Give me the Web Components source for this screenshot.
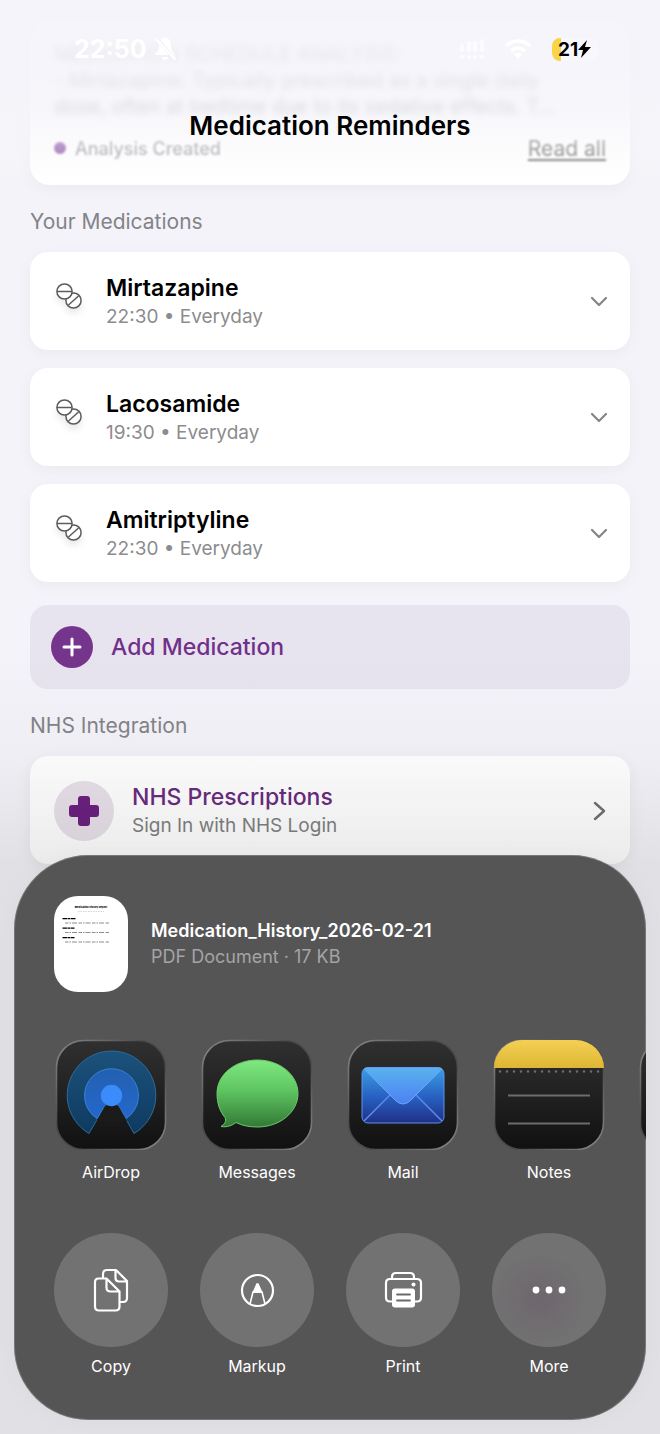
<!DOCTYPE html>
<html lang="en">
<head>
<meta charset="utf-8">
<meta name="viewport" content="width=device-width, initial-scale=1">
<title>Medication Reminders</title>
<style>
  body { margin: 0; background: #f4f3f9; font-family: Inter, "Liberation Sans", sans-serif; color: #000; }
</style>
</head>
<body>
<app-screen>
  <status-bar slot="top"></status-bar>
  <h1 slot="top">Medication Reminders</h1>

  <analysis-card>
    MEDICATION SCHEDULE ANALYSIS:<br>- Mirtazapine: Typically prescribed as a single daily<br>dose, often at bedtime due to its sedative effects. T…
    <span slot="status">Analysis Created</span>
    <a slot="link" href="#analysis">Read all</a>
  </analysis-card>

  <section-title>Your Medications</section-title>
  <card-stack>
    <med-card>Mirtazapine<span slot="when">22:30 • Everyday</span></med-card>
    <med-card>Lacosamide<span slot="when">19:30 • Everyday</span></med-card>
    <med-card>Amitriptyline<span slot="when">22:30 • Everyday</span></med-card>
  </card-stack>
  <add-button>Add Medication</add-button>

  <section-title>NHS Integration</section-title>
  <link-card>NHS Prescriptions<span slot="detail">Sign In with NHS Login</span></link-card>

  <share-sheet slot="sheet">
    <file-preview slot="file">Medication_History_2026-02-21<span slot="meta">PDF Document · 17 KB</span></file-preview>
    <share-target slot="apps" icon="airdrop">AirDrop</share-target>
    <share-target slot="apps" icon="messages">Messages</share-target>
    <share-target slot="apps" icon="mail">Mail</share-target>
    <share-target slot="apps" icon="notes">Notes</share-target>
    <share-target slot="apps" icon="blank"></share-target>
    <share-target slot="actions" round icon="copy">Copy</share-target>
    <share-target slot="actions" round icon="markup">Markup</share-target>
    <share-target slot="actions" round icon="print">Print</share-target>
    <share-target slot="actions" round icon="more">More</share-target>
  </share-sheet>
</app-screen>

<script>
const define = (name, render) => customElements.define(name, class extends HTMLElement {
  constructor() {
    super();
    const t = document.createElement('template');
    t.innerHTML = typeof render === 'function' ? render(this) : render;
    this.attachShadow({ mode: 'open' }).append(t.content.cloneNode(true));
  }
});

define('app-screen', `
<style>
  :host { display: block; position: relative; min-height: 100vh; box-sizing: border-box; overflow: hidden; }
  header { position: absolute; inset: 0 0 auto; box-sizing: border-box; padding: 34px 0 44px; z-index: 1;
    background: linear-gradient(rgba(245,244,250,.95) 0, rgba(245,244,250,.9) 70px, rgba(246,245,250,.84) 110px, rgba(248,248,251,.45) 150px, rgba(255,255,255,0)); }
  ::slotted(h1) { margin: 0; padding-top: 47px; font-size: 26px; line-height: 30px; font-weight: 600; text-align: center; }
  main { padding: 20px 30px 0; }
  .shade { position: absolute; inset: 0; pointer-events: none;
    background: linear-gradient(transparent 640px, rgba(20,25,15,.025) 757px, rgba(20,25,15,.085) 865px, rgba(20,25,15,.085)); }
  aside { position: absolute; inset: auto 14px 14px; }
</style>
<header><slot name="top"></slot></header>
<main><slot></slot></main>
<div class="shade"></div>
<aside><slot name="sheet"></slot></aside>`);

define('status-bar', `
<style>
  :host { display: flex; align-items: center; height: 30px; padding: 0 62px 0 74px; color: #fff; }
  .time { font-size: 25px; line-height: 30px; font-weight: 700; margin-right: 6px; }
  .right { margin-left: auto; display: flex; align-items: center; gap: 20px; }
  svg { display: block; }
  .battery { display: flex; align-items: center; width: 46px; height: 23px; border-radius: 8px; box-sizing: border-box; padding-left: 6px; color: #000;
    font-size: 19px; font-weight: 700; background: linear-gradient(90deg, #f8d548 9px, #f8f8fc 9px); }
</style>
<span class="time">22:50</span>
<svg width="24" height="26" viewBox="0 0 24 26" aria-hidden="true"><path fill="#fff" d="M12 2c-4 0-6 3-6 7 0 5-1 6-4 9v1h20v-1c-3-3-4-4-4-9 0-4-2-7-6-7zM9 21a3 3 0 0 0 6 0z"/><path stroke="#f4f3f9" stroke-width="4" d="M4 3l18 20"/><path stroke="#fff" stroke-width="2" stroke-linecap="round" d="M3 3l19 20"/></svg>
<div class="right">
  <svg width="24" height="22" viewBox="0 0 24 22" fill="#fcfcff" aria-hidden="true"><rect x="0" y="6" width="4" height="8" rx="2"/><rect x="7" y="3" width="4" height="11" rx="2"/><rect x="13" y="3" width="4" height="11" rx="2"/><rect x="20" y="1" width="4" height="13" rx="2"/><circle cx="2" cy="19" r="2"/><circle cx="9" cy="19" r="2"/><circle cx="15" cy="19" r="2"/><circle cx="22" cy="19" r="2"/></svg>
  <svg width="28" height="20" viewBox="0 0 28 20" fill="none" stroke="#fff" stroke-width="3.6" aria-hidden="true"><path d="M2 7a17 17 0 0 1 24 0M7 12a10 10 0 0 1 14 0"/><path fill="#fff" stroke="none" d="M10 15q4-3 8 0l-4 5z"/></svg>
  <div class="battery">21<svg width="13" height="18" viewBox="0 0 13 18" aria-hidden="true"><path d="M9 0L0 10h5l-2 8 10-11H7z"/></svg></div>
</div>`);

define('analysis-card', `
<style>
  :host { display: block; background: #fff; border-radius: 20px; padding: 21px 24px 23px; box-shadow: 0 4px 16px rgba(0,0,0,.04); }
  p { margin: 0; font-size: 20px; line-height: 26px; color: #444; filter: blur(3px); white-space: nowrap; }
  footer { display: flex; align-items: center; gap: 9px; height: 28px; margin-top: 15px; font-size: 18px; font-weight: 500; color: #8e8e93; filter: blur(1px); }
  i { width: 12px; height: 12px; border-radius: 50%; background: #7d3a96; }
  ::slotted(a) { margin-left: auto; color: #555; font-size: 21px; font-weight: 400; text-underline-offset: 3px; }
</style>
<p><slot></slot></p>
<footer><i></i><slot name="status"></slot><slot name="link"></slot></footer>`);

define('section-title', `
<style>
  :host { display: block; margin: 23px 0 16px; }
  h2 { margin: 0; font-size: 21px; line-height: 28px; font-weight: 400; color: #838388; }
</style>
<h2><slot></slot></h2>`);

define('card-stack', `
<style>:host { display: flex; flex-direction: column; gap: 18px; }</style><slot></slot>`);

define('med-card', `
<style>
  :host { display: flex; align-items: center; gap: 22px; padding: 21px 22px 19px 24px; background: #fff; border-radius: 18px; box-shadow: 0 4px 16px rgba(0,0,0,.04); }
  .pills { align-self: flex-start; margin-top: 8px; filter: drop-shadow(0 5px 3px rgba(0,0,0,.08)); }
  .text { flex: 1; }
  h3 { margin: 0; font-size: 23px; line-height: 30px; font-weight: 600; }
  p { margin: 0; font-size: 19px; line-height: 28px; color: #8c8c8e; }
  button { display: flex; padding: 0; border: 0; background: none; }
</style>
<svg class="pills" width="30" height="30" viewBox="0 0 30 30" fill="#fff" stroke="#5c5c5c" stroke-width="1.5" aria-hidden="true"><circle cx="19.5" cy="19.5" r="7.6"/><path d="M14.500 24l10-9"/><circle cx="10.500" cy="10.500" r="7.600"/><path d="M3 10.500h15"/></svg>
<div class="text"><h3><slot></slot></h3><p><slot name="when"></slot></p></div>
<button aria-label="Expand"><svg width="18" height="18" viewBox="0 0 18 18" fill="none" stroke="#858588" stroke-width="2.2" stroke-linecap="round" stroke-linejoin="round"><path d="M2 5l7 7 7-7"/></svg></button>`);

define('add-button', `
<style>
  :host { display: block; margin-top: 23px; }
  button { display: flex; align-items: center; gap: 18px; width: 100%; height: 84px; padding: 0 21px; border: 0; border-radius: 18px; background: #e8e4ef; color: #71308a; font: 500 23px/30px Inter, sans-serif; }
</style>
<button><svg width="42" height="42" viewBox="0 0 42 42" aria-hidden="true"><circle cx="21" cy="21" r="21" fill="#76358c"/><path d="M21 13v16M13 21h16" stroke="#fff" stroke-width="3" stroke-linecap="round"/></svg><span><slot></slot></span></button>`);

define('link-card', `
<style>
  :host { display: block; }
  a { display: flex; align-items: center; gap: 18px; padding: 25px 24px 23px; background: #fff; border-radius: 18px; box-shadow: 0 4px 16px rgba(0,0,0,.06); text-decoration: none; color: #6a2a80; }
  .text { flex: 1; font-size: 23px; line-height: 30px; font-weight: 500; }
  .detail { display: block; font-size: 19px; line-height: 28px; font-weight: 400; color: #7f7f82; }
</style>
<a href="#nhs">
<svg width="60" height="60" viewBox="0 0 60 60" aria-hidden="true"><circle cx="30" cy="30" r="30" fill="#e8e0ea"/><path fill="#6b2080" d="M27 15h6q3 0 3 3v6h6q3 0 3 3v6q0 3-3 3h-6v6q0 3-3 3h-6q-3 0-3-3v-6h-6q-3 0-3-3v-6q0-3 3-3h6v-6q0-3 3-3z"/></svg>
<span class="text"><slot></slot><span class="detail"><slot name="detail"></slot></span></span>
<svg width="14" height="22" viewBox="0 0 14 22" fill="none" stroke="#6f6f71" stroke-width="2.4" stroke-linecap="round" stroke-linejoin="round" aria-hidden="true"><path d="M3 3l9 8-9 8"/></svg></a>`);

define('share-sheet', `
<style>
  :host { display: block; box-sizing: border-box; padding: 41px 0 42px; border-radius: 74px; background: #555556; color: #fff; overflow: hidden; box-shadow: inset 0 0 0 1px rgba(255,255,255,.2), 0 0 24px rgba(0,0,0,.03); }
  .file { padding: 0 40px; }
  .row { display: flex; gap: 32px; padding: 0 40px; overflow: hidden; }
  .apps { margin: 47px 0 49px; }
</style>
<div class="file"><slot name="file"></slot></div>
<div class="row apps"><slot name="apps"></slot></div>
<div class="row"><slot name="actions"></slot></div>`);

define('file-preview', `
<style>
  :host { display: flex; align-items: center; gap: 23px; }
  svg { border-radius: 24px; background: #fff; }
  .name { font-size: 18px; line-height: 26px; font-weight: 600; }
  .meta { font-size: 18px; line-height: 26px; color: #a4a4a6; }
</style>
<svg width="74" height="96" viewBox="0 0 148 192" aria-hidden="true">
<text x="74" y="23" text-anchor="middle" font-size="5" font-weight="800">Medication History Report</text>
<g stroke="#000"><path stroke="#aaa" stroke-width="1" stroke-dasharray="3 2" d="M48 31h52"/>
<path stroke-width="2.500" stroke-dasharray="9 1 5 1" d="M17 45h27M17 64h24M17 83h24"/>
<path stroke="#666" stroke-width="1.500" stroke-dasharray="7 2 3 2 10 3" d="M22 54h88M22 73h88M22 92h88"/></g></svg>
<div><div class="name"><slot></slot></div><div class="meta"><slot name="meta"></slot></div></div>`);

const dark = '<rect x="2.5" y="1.5" width="109" height="109" rx="27" fill="url(#bg)" stroke="url(#rim)" stroke-width="1.6"/>';
const defs = `<defs>
<linearGradient id="bg" x2="0" y2="1"><stop stop-color="#303030"/><stop offset="1" stop-color="#111"/></linearGradient>
<linearGradient id="rim" x2="1" y2="1"><stop stop-color="#8a8a8a"/><stop offset=".4" stop-color="#4a4a4a"/><stop offset=".6" stop-color="#4a4a4a"/><stop offset="1" stop-color="#888"/></linearGradient>
<linearGradient id="deep" x2="0" y2="1"><stop stop-color="#1b527c"/><stop offset="1" stop-color="#0f3a60"/></linearGradient>
<linearGradient id="mid" x2="0" y2="1"><stop stop-color="#2260b0"/><stop offset="1" stop-color="#2468cc"/></linearGradient>
<linearGradient id="green" x2="0" y2="1"><stop stop-color="#7fe87f"/><stop offset=".45" stop-color="#5fc561"/><stop offset="1" stop-color="#327a36"/></linearGradient>
<linearGradient id="env" x2="0" y2="1"><stop stop-color="#3d9fe4"/><stop offset=".5" stop-color="#2864c4"/><stop offset="1" stop-color="#212f88"/></linearGradient>
<linearGradient id="flap" x2="0" y2="1"><stop stop-color="#58b2ee"/><stop offset="1" stop-color="#4d80f4"/></linearGradient>
<linearGradient id="gold" x2="0" y2="1"><stop stop-color="#f3d054"/><stop offset="1" stop-color="#dfb634"/></linearGradient>
<clipPath id="tile"><rect x="2" y="1" width="110" height="110" rx="28"/></clipPath></defs>`;
const icons = {
  airdrop: `${dark}<path d="M35 94.500A44.300 44.300 0 1 1 80 94.500L64.500 67Q57.500 62 51 67z" fill="url(#deep)" stroke="#2b6c9c" stroke-linejoin="round"/><path d="M43 79.500A27 27 0 1 1 72 79.500L64.500 67Q57.500 62 51 67z" fill="url(#mid)" stroke="#3c80d4" stroke-linejoin="round"/><path d="M42.500 82L51 67Q57.500 62 64.500 67L73 82z" fill="#1b1b1b"/><circle cx="57.500" cy="56.500" r="10.700" fill="#3c8bfa"/>`,
  messages: `${dark}<path d="M57.500 21C35 21 17 35.500 17 54.500c0 10 3 18 8 24 2 4-1 7-4 9 6 1 11-1 15-4 6 3 13 4.500 21.500 4.500C80 88 98 73 98 54.500S80 21 57.500 21z" fill="url(#green)" stroke="#6dcc6e"/>`,
  mail: `${dark}<rect x="16" y="28.500" width="82" height="55.500" rx="6" fill="url(#env)" stroke="#5a94e8"/><path d="M18 82l26-26M96 82L70 56" stroke="#5b8af0" stroke-width="1.500"/><path d="M18 30q1-1 4-1h70q3 0 4 1L65 61q-8 8-16 0z" fill="url(#flap)" stroke="#64a8f4"/>`,
  notes: `${dark}<g clip-path="url(#tile)"><rect x="2" y="1" width="110" height="28" fill="url(#gold)"/></g><path d="M8 32.500h100" stroke="#6c6c6c" stroke-width="2.600" stroke-linecap="round" stroke-dasharray="0 7"/><path d="M16 56.500h82M16 84.500h82" stroke="#6c6c6c" stroke-width="2"/>`,
  blank: dark,
  copy: `<g fill="none" stroke="#fff" stroke-width="2.200" stroke-linejoin="round"><path d="M49 45v-4q0-4 4-4h9l11 11v17q0 4-4 4h-4M61.500 37v8q0 3.500 3.500 3.500h8"/><path d="M44.500 45.500h8l13 13v15q0 4-4 4H45q-4 0-4-4v-24q0-4 3.500-4zM52.500 46v8.500q0 4 4 4H65"/></g>`,
  markup: `<g fill="none" stroke="#fff" stroke-width="2.200"><circle cx="57.500" cy="57.500" r="15.500"/><path stroke-width="1.600" d="M50 71l3-12h9l3 12"/><path d="M53.500 59l3.500-8h1l3.500 8z" fill="#fff" stroke-width="1.600"/></g>`,
  print: `<g fill="none" stroke="#fff" stroke-width="2.200"><path d="M46 46v-2q0-4 4-4h14q4 0 4 4v2"/><path d="M46 68.500h-2q-4 0-4-4V50q0-4 4-4h27q4 0 4 4v14.500q0 4-4 4h-2"/></g><circle cx="67.500" cy="51.500" r="2" fill="#fff"/><rect x="46" y="55.500" width="23" height="19" rx="3" fill="#fff"/><path d="M51 61.500h13M51 67.500h13" stroke="#6a6a6a" stroke-width="1.800" stroke-linecap="round"/>`,
  more: `<g fill="#fff"><circle cx="44" cy="57" r="3.400"/><circle cx="57" cy="57" r="3.400"/><circle cx="70" cy="57" r="3.400"/></g>`
};

define('share-target', el => {
  const round = el.hasAttribute('round');
  return `
<style>
  :host { display: block; flex: none; width: 114px; }
  button { display: flex; flex-direction: column; align-items: center; gap: ${round ? 7 : 10}px; width: 100%; padding: 0; border: 0; background: none; color: #fff; font: 400 16px/24px Inter, sans-serif; }
  svg { display: block; ${round ? `border-radius: 50%; background: ${el.getAttribute('icon') === 'more' ? 'radial-gradient(circle at 42% 58%, #6e666d, #727272 50%)' : '#727272'};` : ''} }
  span { min-height: 24px; }
</style>
<button><svg width="114" height="${round ? 114 : 111}" viewBox="0 0 114 ${round ? 114 : 111}" aria-hidden="true">${round ? '' : defs}${icons[el.getAttribute('icon')]}</svg><span><slot></slot></span></button>`;
});
</script>
</body>
</html>
